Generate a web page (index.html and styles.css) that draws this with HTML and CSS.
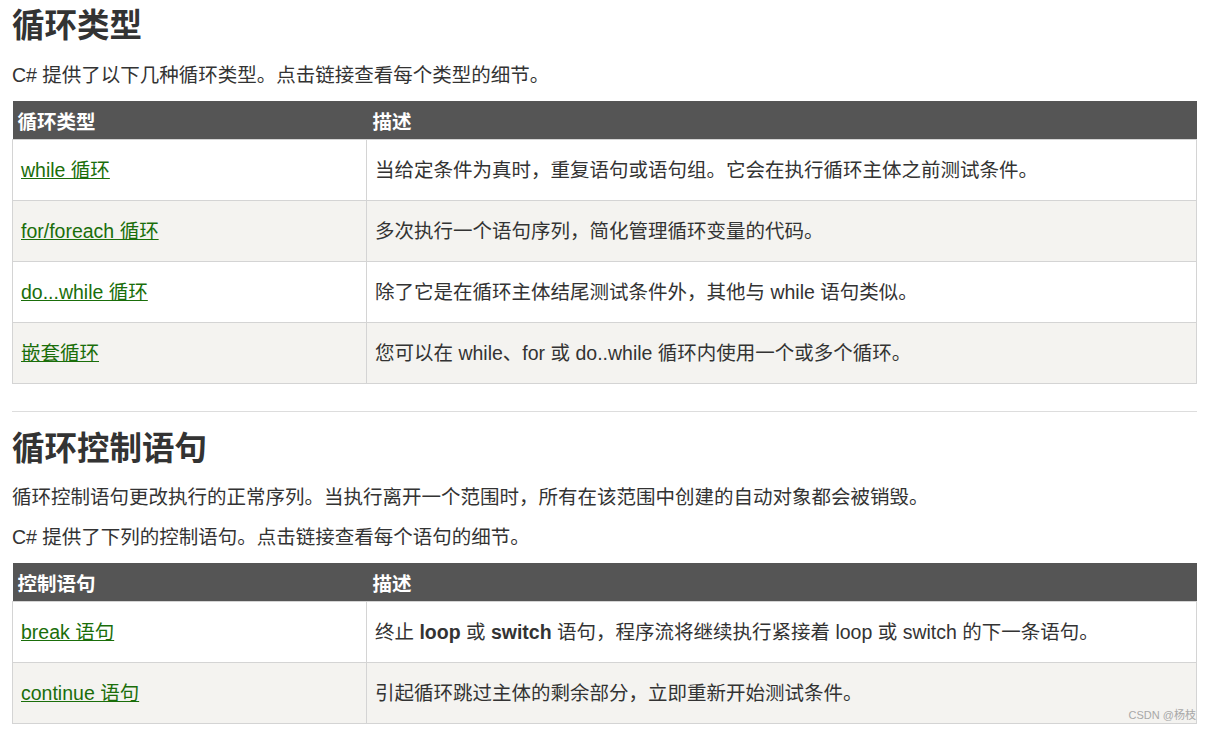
FILE: index.html
```html
<!DOCTYPE html>
<html lang="zh-CN">
<head>
<meta charset="utf-8">
<title>循环</title>
<link rel="stylesheet" href="styles.css">
</head>
<body>
<div class="page">
  <h2 class="title">循环类型</h2>
  <p class="para">C# 提供了以下几种循环类型。点击链接查看每个类型的细节。</p>
  <table class="ref">
    <thead>
      <tr><th class="c1">循环类型</th><th>描述</th></tr>
    </thead>
    <tbody>
      <tr><td><a href="#">while 循环</a></td><td>当给定条件为真时，重复语句或语句组。它会在执行循环主体之前测试条件。</td></tr>
      <tr class="alt"><td><a href="#">for/foreach 循环</a></td><td>多次执行一个语句序列，简化管理循环变量的代码。</td></tr>
      <tr><td><a href="#">do...while 循环</a></td><td>除了它是在循环主体结尾测试条件外，其他与 while 语句类似。</td></tr>
      <tr class="alt"><td><a href="#">嵌套循环</a></td><td>您可以在 while、for 或 do..while 循环内使用一个或多个循环。</td></tr>
    </tbody>
  </table>
  <hr class="sep">
  <h2 class="title second">循环控制语句</h2>
  <p class="para first">循环控制语句更改执行的正常序列。当执行离开一个范围时，所有在该范围中创建的自动对象都会被销毁。</p>
  <p class="para">C# 提供了下列的控制语句。点击链接查看每个语句的细节。</p>
  <div class="tablewrap">
    <table class="ref">
      <thead>
        <tr><th class="c1">控制语句</th><th>描述</th></tr>
      </thead>
      <tbody>
        <tr><td><a href="#">break 语句</a></td><td>终止 <b>loop</b> 或 <b>switch</b> 语句，程序流将继续执行紧接着 loop 或 switch 的下一条语句。</td></tr>
        <tr class="alt"><td><a href="#">continue 语句</a></td><td>引起循环跳过主体的剩余部分，立即重新开始测试条件。</td></tr>
      </tbody>
    </table>
    <span class="mark">CSDN @杨枝</span>
  </div>
</div>
</body>
</html>
```
FILE: styles.css
```css
html, body {
  margin: 0;
  padding: 0;
  background: #fff;
}
body {
  font-family: "Liberation Sans", "Noto Sans CJK SC", sans-serif;
  color: #333;
}
.page {
  width: 1185px;
  margin-left: 12px;
}
.title {
  font-size: 32.5px;
  line-height: 40px;
  height: 40px;
  font-weight: bold;
  margin: 6px 0 14px;
  color: #333;
}
.title.second {
  margin: 17px 0 13px;
}
.para {
  font-size: 19.5px;
  line-height: 30px;
  margin: 0 0 11px;
}
.para.first {
  margin-bottom: 10px;
}
.ref {
  width: 1185px;
  border-collapse: collapse;
  font-size: 19.5px;
  table-layout: fixed;
}
.ref th {
  background: #555;
  color: #fff;
  font-weight: bold;
  text-align: left;
  height: 35px;
  padding: 3px 6px 0;
  line-height: 24px;
  border: none;
}
.ref th.c1 {
  width: 343px;
  padding-left: 5px;
}
.ref td {
  height: 60px;
  padding: 0 8px;
  border: 1px solid #d4d4d4;
  line-height: 24px;
  background: #fff;
}
.ref tr.alt td {
  background: #f4f3f0;
}
.ref a {
  color: #1a6e0a;
  text-decoration: underline;
}
.ref b {
  font-weight: bold;
  color: #333;
}
.sep {
  border: none;
  border-top: 1px solid #ddd;
  height: 0;
  margin: 27px 0 0;
}
.tablewrap {
  position: relative;
}
.mark {
  position: absolute;
  right: 1px;
  bottom: 2px;
  font-size: 11px;
  color: #a8a8a8;
  line-height: 14px;
}
```
